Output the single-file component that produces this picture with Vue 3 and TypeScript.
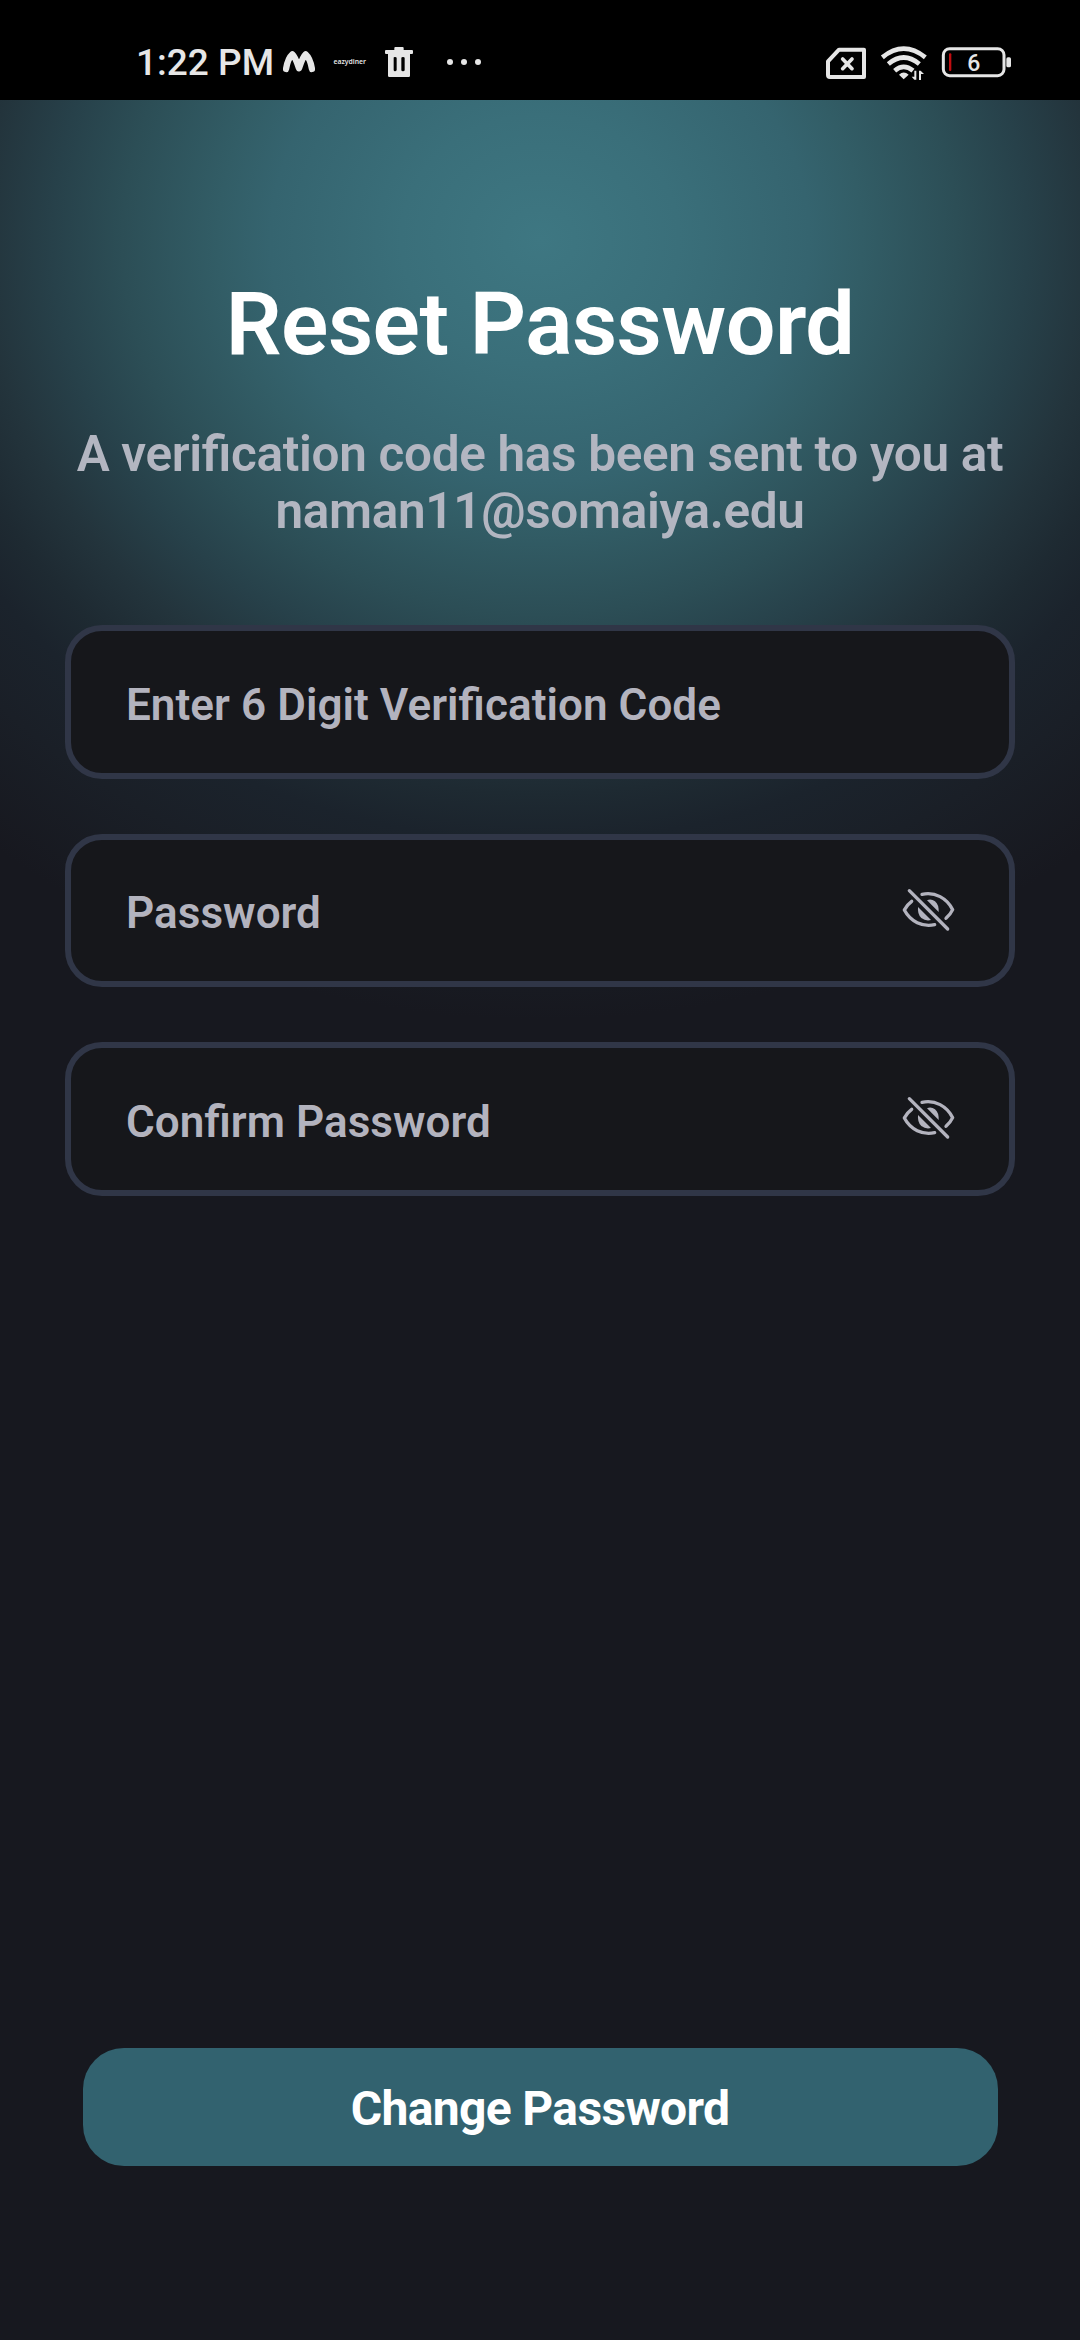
<script setup lang="ts">
interface Field {
  label: string
  secret: boolean
}

const fields: Field[] = [
  { label: 'Enter 6 Digit Verification Code', secret: false },
  { label: 'Password', secret: true },
  { label: 'Confirm Password', secret: true },
]
const email = 'naman11@somaiya.edu'
</script>

<template>
  <div class="screen">
    <header class="status">
      <div class="status-left">
        <span class="clock">1:22 PM</span>
        <svg class="brand" viewBox="0 0 96 64" width="32" height="21.3">
          <path d="M9 54C12 36 19 18 28 10C37 18 42 34 48 52C54 34 59 18 68 10C77 18 84 36 87 54" fill="none" stroke="#e6e6e6" stroke-width="19" stroke-linecap="round" stroke-linejoin="round" />
        </svg>
        <span class="diner">eazydiner</span>
        <svg class="trash" viewBox="0 0 84 90" width="28" height="30">
          <path fill="#e6e6e6" fill-rule="evenodd" d="M28 3q0-3 3-3h22q3 0 3 3v6h25q3 0 3 3v6q0 3-3 3h-6v65q0 4-4 4H13q-4 0-4-4V21H3q-3 0-3-3v-6q0-3 3-3h25zM26 33v36q0 4 4 4t5-4V33q0-3-5-3t-4 3zM49 33v36q0 4 5 4t5-4V33q0-3-5-3t-5 3z" />
        </svg>
        <svg class="dots" viewBox="0 0 34 8" width="34" height="8">
          <circle cx="3" cy="4" r="3" fill="#e6e6e6" />
          <circle cx="17" cy="4" r="3" fill="#e6e6e6" />
          <circle cx="31" cy="4" r="3" fill="#e6e6e6" />
        </svg>
      </div>
      <svg class="status-right" viewBox="0 0 570 120" width="190" height="40">
        <g fill="none" stroke="#e6e6e6">
          <path d="M21 105V64L54 29H129V111H27Q21 111 21 105Z" stroke-width="12" stroke-linejoin="round" />
          <path d="M65 57L93 86M93 57L65 86" stroke-width="11" stroke-linecap="round" />
          <path d="M184 52Q248 0 313 52" stroke-width="14" />
          <path d="M202 72Q248 33 295 72" stroke-width="14" />
          <path d="M221 92Q248 69 276 92" stroke-width="14" />
          <rect x="367" y="26" width="182" height="81" rx="19" stroke-width="9" />
        </g>
        <path d="M234 104Q248 91 263 104L248 118Z" fill="#e6e6e6" />
        <path d="M286 92v27h-6l-8-9h8V92zM294 120V92h5l10 10h-9v18z" fill="#e6e6e6" />
        <rect x="384" y="40" width="7" height="53" rx="3" fill="#c00d10" />
        <text x="458" y="93" text-anchor="middle" class="level">6</text>
        <rect x="556" y="52" width="14" height="30" rx="5" fill="#e6e6e6" />
      </svg>
    </header>

    <main class="page">
      <h1>Reset Password</h1>
      <p class="note">A verification code has been sent to you at<br />{{ email }}</p>
      <form class="fields">
        <div v-for="field in fields" :key="field.label" class="field">
          <span class="label">{{ field.label }}</span>
          <svg v-if="field.secret" class="eye" viewBox="60 50 165 135" width="55" height="45">
            <g fill="none" stroke="#b3b3be" stroke-width="10" stroke-linecap="round" stroke-linejoin="round">
              <path d="M85 61L200 176" />
              <path d="M123 72C162 63 198 84 215 118Q208 133 195 144" />
              <path d="M92 93Q77 104 70 119C89 154 124 171 161 163" />
            </g>
            <path d="M138 90Q150 84 162 93Q174 103 173 125Z" fill="#b3b3be" />
            <path d="M111 110L150 149Q134 153 121 143Q109 132 111 110Z" fill="#b3b3be" />
          </svg>
        </div>
      </form>
      <button type="button" class="submit">Change Password</button>
    </main>
  </div>
</template>

<style>
body {
  background: #17181f;
}
</style>

<style scoped>
.screen {
  display: flex;
  flex-direction: column;
  width: 1080px;
  height: 2340px;
  overflow: hidden;
  font-family: Roboto, sans-serif;
  background: #17181f;
}
.status {
  display: flex;
  justify-content: space-between;
  box-sizing: border-box;
  height: 100px;
  padding: 0 69.5px 0 136px;
  background: #000;
  color: #e6e6e6;
}
.status-left {
  display: flex;
  align-items: center;
  height: 124px;
}
.clock {
  width: 147px;
  padding-top: 2px;
  font-size: 37px;
  font-weight: 500;
  line-height: 44px;
  white-space: nowrap;
}
.diner {
  width: 33px;
  margin: 0 18.5px 0 18.5px;
  font: 600 6.8px/10px "Noto Sans", sans-serif;
}
.dots {
  margin-left: 33.5px;
}
.status-right {
  margin-top: 40px;
}
.level {
  font-size: 69px;
  font-weight: 500;
  fill: #e6e6e6;
}
.page {
  display: flex;
  flex: 1;
  flex-direction: column;
  align-items: center;
  background: radial-gradient(870px 780px at 540px 140px, #3e7782 0%, #3a6f7a 16%, #35646f 31%, #325d66 37%, #2c4e56 48%, #27414a 56%, #23343c 64%, #1e2a32 71%, #1b232c 77%, #1a1f27 86%, #17181f 100%);
}
h1 {
  margin: 172px 0 0;
  font-size: 88px;
  font-weight: 600;
  line-height: 103px;
  letter-spacing: -0.55px;
  color: #fff;
}
.note {
  margin: 51px 0 0;
  font-size: 49.5px;
  font-weight: 600;
  line-height: 57px;
  text-align: center;
  white-space: nowrap;
  letter-spacing: -0.33px;
  font-feature-settings: "liga" 1;
  color: #b3b6c1;
}
.fields {
  display: flex;
  flex-direction: column;
  gap: 55px;
  margin-top: 85px;
}
.field {
  display: flex;
  align-items: center;
  justify-content: space-between;
  box-sizing: border-box;
  width: 950px;
  height: 153.6px;
  padding: 0 53.5px 2px 55px;
  border: 6px solid #303647;
  border-radius: 37px;
  background: #16171b;
}
.label {
  padding-top: 8px;
  font-size: 44px;
  font-weight: 600;
  line-height: 52px;
  letter-spacing: 0.06px;
  font-feature-settings: "liga" 1;
  color: #b3b3be;
}
.submit {
  width: 915px;
  height: 118px;
  margin: auto 0 174px;
  padding: 3px 0 0;
  border: 0;
  border-radius: 41px;
  background: #32626f;
  color: #fff;
  font: 700 48px/58px Roboto, sans-serif;
  letter-spacing: -0.65px;
}
</style>
